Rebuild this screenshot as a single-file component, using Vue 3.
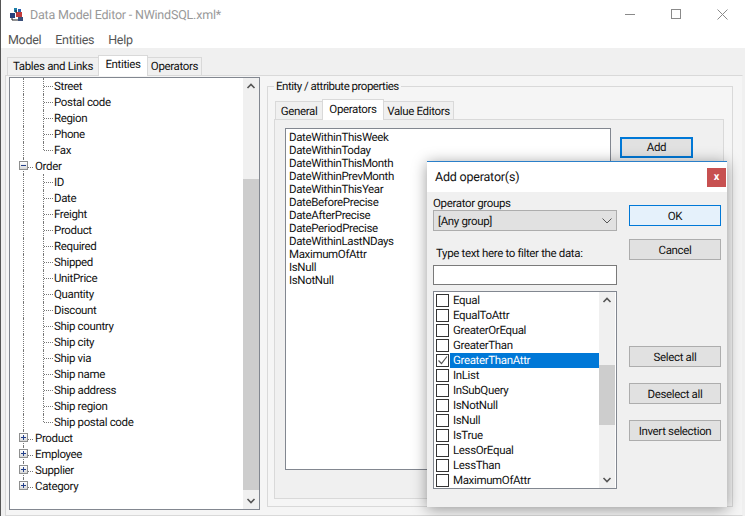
<script setup>
const address = ['Street', 'Postal code', 'Region', 'Phone', 'Fax'];
const order = ['ID', 'Date', 'Freight', 'Product', 'Required', 'Shipped', 'UnitPrice', 'Quantity', 'Discount',
    'Ship country', 'Ship city', 'Ship via', 'Ship name', 'Ship address', 'Ship region', 'Ship postal code'];
const roots = ['Product', 'Employee', 'Supplier', 'Category'];
const props = ['DateWithinThisWeek', 'DateWithinToday', 'DateWithinThisMonth', 'DateWithinPrevMonth', 'DateWithinThisYear',
    'DateBeforePrecise', 'DateAfterPrecise', 'DatePeriodPrecise', 'DateWithinLastNDays', 'MaximumOfAttr', 'IsNull', 'IsNotNull'];
const ops = ['Equal', 'EqualToAttr', 'GreaterOrEqual', 'GreaterThan', 'GreaterThanAttr', 'InList', 'InSubQuery',
    'IsNotNull', 'IsNull', 'IsTrue', 'LessOrEqual', 'LessThan', 'MaximumOfAttr'];
</script>
<template>
    <div class="win">
        <div class="title hor">
            <svg class="appicon" width="16" height="14" viewBox="0 0 16 14">
                <rect x="5" y="0" width="3" height="4" fill="#1f7fa8"/>
                <rect x="9" y="1" width="3" height="3" fill="#2d5fb0"/>
                <rect x="1" y="5" width="5" height="5" fill="#27407a"/>
                <rect x="7" y="4" width="6" height="5" fill="#c23b3b"/>
                <rect x="9" y="9" width="5" height="4" fill="#3a4f7a"/>
                <path d="M3 10v2h6M7 2v3" stroke="#222" fill="none"/>
            </svg>
            <span class="caption">Data Model Editor - NWindSQL.xml*</span>
            <div class="ctl first">
                <svg width="11" height="11" viewBox="0 0 11 11"><path d="M0 5.5h10" stroke="#8a8a8a"/></svg>
            </div>
            <div class="ctl">
                <svg width="11" height="11" viewBox="0 0 11 11"><rect x=".5" y=".5" width="9" height="9" fill="none" stroke="#8a8a8a"/></svg>
            </div>
            <div class="ctl">
                <svg width="11" height="11" viewBox="0 0 11 11"><path d="M.5.5l10 10M10.5.5l-10 10" stroke="#8a8a8a"/></svg>
            </div>
        </div>
        <div class="menu hor">
            <span>Model</span><span>Entities</span><span>Help</span>
        </div>
        <div class="content">
            <div class="tabs hor">
                <div class="tab t1">Tables and Links</div>
                <div class="tab on t2">Entities</div>
                <div class="tab t3">Operators</div>
            </div>
            <div class="panel hor">
                <div class="tree">
                    <div class="rows">
                        <div v-for="(a, i) in address" class="row">
                            <i class="v1"></i><i class="elbow" :class="{last: i == address.length - 1}"></i><span>{{a}}</span>
                        </div>
                        <div class="row">
                            <i class="v0"><b class="box">
                                <svg width="9" height="9" viewBox="0 0 9 9"><path d="M2 4.5h5" stroke="#24408a"/></svg>
                            </b></i><i class="dash"></i><span>Order</span>
                        </div>
                        <div v-for="(a, i) in order" class="row">
                            <i class="v1"></i><i class="elbow" :class="{last: i == order.length - 1}"></i><span>{{a}}</span>
                        </div>
                        <div v-for="(r, i) in roots" class="row">
                            <i class="v0" :class="{end: i == roots.length - 1}"><b class="box">
                                <svg width="9" height="9" viewBox="0 0 9 9"><path d="M2 4.5h5M4.5 2v5" stroke="#24408a"/></svg>
                            </b></i><i class="dash"></i><span>{{r}}</span>
                        </div>
                    </div>
                    <div class="sbar big">
                        <svg width="16" height="16" viewBox="0 0 16 16"><path d="M4.5 10l3.500-3.500 3.500 3.500" fill="none" stroke="#555" stroke-width="1.6"/></svg>
                        <div class="track"><div class="thumb"></div></div>
                        <svg width="16" height="16" viewBox="0 0 16 16"><path d="M4.5 6l3.500 3.500 3.500-3.500" fill="none" stroke="#555" stroke-width="1.6"/></svg>
                    </div>
                </div>
                <div class="group">
                    <div class="legend">Entity / attribute properties</div>
                    <div class="tabs hor">
                        <div class="tab t4">General</div>
                        <div class="tab on t5">Operators</div>
                        <div class="tab t6">Value Editors</div>
                    </div>
                    <div class="inner hor">
                        <div class="plist">
                            <div v-for="p in props">{{p}}</div>
                        </div>
                        <div class="btn add">Add</div>
                    </div>
                </div>
            </div>
        </div>

        <div class="dlg">
            <div class="dlg-title hor">
                <span>Add operator(s)</span>
                <div class="close">x</div>
            </div>
            <div class="dlg-body hor">
                <div class="dlg-left">
                    <div class="lbl">Operator groups</div>
                    <div class="combo hor">
                        <span>[Any group]</span>
                        <svg width="10" height="6" viewBox="0 0 10 6"><path d="M.5.5L5 5 9.500.5" fill="none" stroke="#555"/></svg>
                    </div>
                    <div class="lbl filter">Type text here to filter the data:</div>
                    <div class="input"></div>
                    <div class="oplist hor">
                        <div class="oprows">
                            <div v-for="o in ops" class="op hor" :class="{sel: o == 'GreaterThanAttr'}">
                                <i class="chk">
                                    <svg v-if="o == 'GreaterThanAttr'" width="11" height="11" viewBox="0 0 11 11"><path d="M1.500 5.500l3 3L10 1.500" fill="none" stroke="#555" stroke-width="1.200"/></svg>
                                </i>
                                <span>{{o}}</span>
                            </div>
                        </div>
                        <div class="sbar small">
                            <svg width="16" height="16" viewBox="0 0 16 16"><path d="M4.500 10l3.500-3.500 3.500 3.500" fill="none" stroke="#555" stroke-width="1.600"/></svg>
                            <div class="track"><div class="thumb"></div></div>
                            <svg width="16" height="16" viewBox="0 0 16 16"><path d="M4.500 6l3.500 3.500 3.500-3.500" fill="none" stroke="#555" stroke-width="1.600"/></svg>
                        </div>
                    </div>
                </div>
                <div class="dlg-right">
                    <div class="btn ok">OK</div>
                    <div class="btn cancel">Cancel</div>
                    <div class="btn selall">Select all</div>
                    <div class="btn next">Deselect all</div>
                    <div class="btn next">Invert selection</div>
                </div>
            </div>
        </div>
    </div>
</template>
<style>
html, body {
    margin: 0;
    background: #fff;
}
</style>
<style scoped>
.hor {
    display: flex;
}
.win {
    position: relative;
    width: 745px;
    height: 516px;
    box-sizing: border-box;
    border-left: 1px solid #555;
    overflow: hidden;
    display: flex;
    flex-direction: column;
    font-family: Roboto, "Liberation Sans", sans-serif;
    font-size: 11.5px;
    letter-spacing: -.35px;
    text-rendering: geometricPrecision;
    color: #111;
    background: #fff;
}
.title {
    height: 29px;
    align-items: center;
    flex-shrink: 0;
}
.appicon {
    margin-left: 8px;
}
.caption {
    margin-left: 5px;
    margin-top: 2px;
    font-size: 12.500px;
    letter-spacing: -.2px;
    color: #999;
}
.ctl {
    width: 46px;
    height: 29px;
    display: flex;
    align-items: center;
    justify-content: center;
}
.ctl.first {
    margin-left: auto;
}
.menu {
    height: 19px;
    flex-shrink: 0;
    align-items: center;
    padding: 3px 0 0 7px;
    box-sizing: border-box;
    gap: 14px;
    font-size: 12.500px;
    letter-spacing: -.3px;
    color: #555;
}
.content {
    flex-grow: 1;
    background: #f0f0f0;
    padding: 6px 4px 0 4px;
}
.tabs {
    align-items: flex-end;
    height: 21px;
    padding-left: 2px;
}
.tab {
    height: 18px;
    line-height: 17px;
    box-sizing: border-box;
    text-align: center;
    background: #f0f0f0;
    border: 1px solid #d9d9d9;
    border-bottom: none;
    margin-right: -1px;
}
.tab.on {
    height: 21px;
    line-height: 17px;
    background: #fff;
    position: relative;
    z-index: 1;
    margin-bottom: -1px;
}
.group .tab {
    line-height: 19px;
}
.t1 {
    width: 92px;
}
.t2 {
    width: 50px;
}
.t3 {
    width: 55px;
}
.t4 {
    width: 48px;
    margin-left: -1px;
}
.t5 {
    width: 62px;
}
.t6 {
    width: 71px;
}
.panel {
    height: 441px;
    width: 738px;
    box-sizing: border-box;
    border: 1px solid #d9d9d9;
    border-right-color: #f0f0f0;
    padding: 1px 0 0 3px;
    background: #f5f5f5;
}
.tree {
    width: 251px;
    height: 433px;
    box-sizing: border-box;
    border: 1px solid #828790;
    background: #fff;
    display: flex;
    flex-shrink: 0;
}
.rows {
    width: 233px;
    overflow: hidden;
}
.row {
    display: flex;
    height: 16px;
    line-height: 16px;
    align-items: stretch;
}
.row i {
    display: block;
    flex-shrink: 0;
}
.v1 {
    width: 19px;
    margin-left: 13px;
    border-left: 1px dotted #777;
}
.elbow {
    width: 10px;
    border-left: 1px dotted #777;
    position: relative;
}
.elbow::after {
    content: '';
    position: absolute;
    left: 0;
    top: 8px;
    width: 9px;
    border-top: 1px dotted #777;
}
.elbow.last {
    height: 8px;
}
.v0 {
    width: 4px;
    margin-left: 13px;
    border-left: 1px dotted #777;
    position: relative;
}
.v0.end {
    height: 8px;
}
.box {
    position: absolute;
    left: -5px;
    top: 3px;
    width: 9px;
    height: 9px;
    box-sizing: border-box;
    border: 1px solid #8e8f8f;
    background: linear-gradient(#fff, #d8d8d8);
    display: block;
}
.box svg {
    position: absolute;
    left: -1px;
    top: -1px;
}
.dash {
    width: 5px;
    margin-right: 2px;
    height: 9px;
    border-bottom: 1px dotted #777;
}
.sbar {
    width: 16px;
    display: flex;
    flex-direction: column;
    background: #f0f0f0;
    flex-shrink: 0;
}
.sbar svg {
    flex-shrink: 0;
}
.track {
    flex-grow: 1;
}
.thumb {
    background: #cdcdcd;
}
.big .thumb {
    height: 311px;
    margin-top: 85px;
}
.small .thumb {
    height: 60px;
    margin-top: 57px;
}
.group {
    position: relative;
    width: 466px;
    height: 421px;
    box-sizing: border-box;
    margin: 9px 0 0 7px;
    border: 1px solid #d9d9d9;
    padding: 11px 6px 0 6px;
}
.legend {
    position: absolute;
    left: 6px;
    top: -8px;
    padding: 0 2px;
    background: #f5f5f5;
    line-height: 15px;
    letter-spacing: -.5px;
}
.inner {
    width: 450px;
    height: 380px;
    box-sizing: border-box;
    border: 1px solid #d9d9d9;
    background: #f0f0f0;
    padding: 8px 0 0 10px;
}
.plist {
    width: 326px;
    height: 342px;
    box-sizing: border-box;
    border: 1px solid #828790;
    background: #fff;
    padding: 2px 3px;
    line-height: 13px;
}
.btn {
    height: 21px;
    line-height: 20px;
    box-sizing: border-box;
    border: 1px solid #adadad;
    background: #e1e1e1;
    text-align: center;
}
.add {
    width: 73px;
    height: 21px;
    line-height: 17px;
    margin: 9px 0 0 9px;
    border: 2px solid #0078d7;
}
.dlg {
    position: absolute;
    left: 426px;
    top: 161px;
    width: 300px;
    height: 345px;
    background: #f0f0f0;
    border-top: 1px solid #2a7fc9;
    box-shadow: 0 2px 14px rgba(0, 0, 0, .4);
    z-index: 5;
}
.dlg-title {
    height: 30px;
    background: #fff;
    padding-left: 8px;
    align-items: center;
    font-size: 12.500px;
    letter-spacing: -.2px;
}
.close {
    width: 19px;
    height: 19px;
    margin: 0 1px 0 auto;
    background: #c75050;
    color: #fff;
    text-align: center;
    line-height: 17px;
    font-weight: 700;
    font-size: 11px;
}
.dlg-body {
    padding: 1px 6px 0 6px;
}
.dlg-left {
    width: 184px;
}
.lbl {
    line-height: 14px;
    margin-top: 3px;
}
.lbl.filter {
    margin: 15px 0 5px 3px;
}
.combo {
    height: 21px;
    box-sizing: border-box;
    border: 1px solid #adadad;
    background: #e1e1e1;
    padding: 0 4px;
    align-items: center;
    justify-content: space-between;
}
.input {
    height: 20px;
    box-sizing: border-box;
    border: 1px solid #7a7a7a;
    background: #fff;
}
.oplist {
    height: 198px;
    margin-top: 6px;
    box-sizing: border-box;
    border: 1px solid #828790;
    background: #fff;
}
.oprows {
    width: 165px;
    padding-top: 1px;
}
.op {
    height: 15px;
    line-height: 15px;
    align-items: center;
}
.chk {
    width: 13px;
    height: 13px;
    box-sizing: border-box;
    border: 1px solid #333;
    background: #fff;
    margin: 0 1px 0 2px;
    flex-shrink: 0;
    display: flex;
}
.op span {
    flex-grow: 1;
    padding-left: 3px;
}
.op.sel span {
    background: #0078d7;
    color: #fff;
}
.dlg-right {
    width: 92px;
    margin-left: 12px;
    padding-top: 12px;
    display: flex;
    flex-direction: column;
}
.ok {
    background: #e5f1fb;
    border-color: #0078d7;
}
.cancel {
    margin-top: 13px;
}
.selall {
    margin-top: 86px;
}
.next {
    margin-top: 16px;
}
</style>
